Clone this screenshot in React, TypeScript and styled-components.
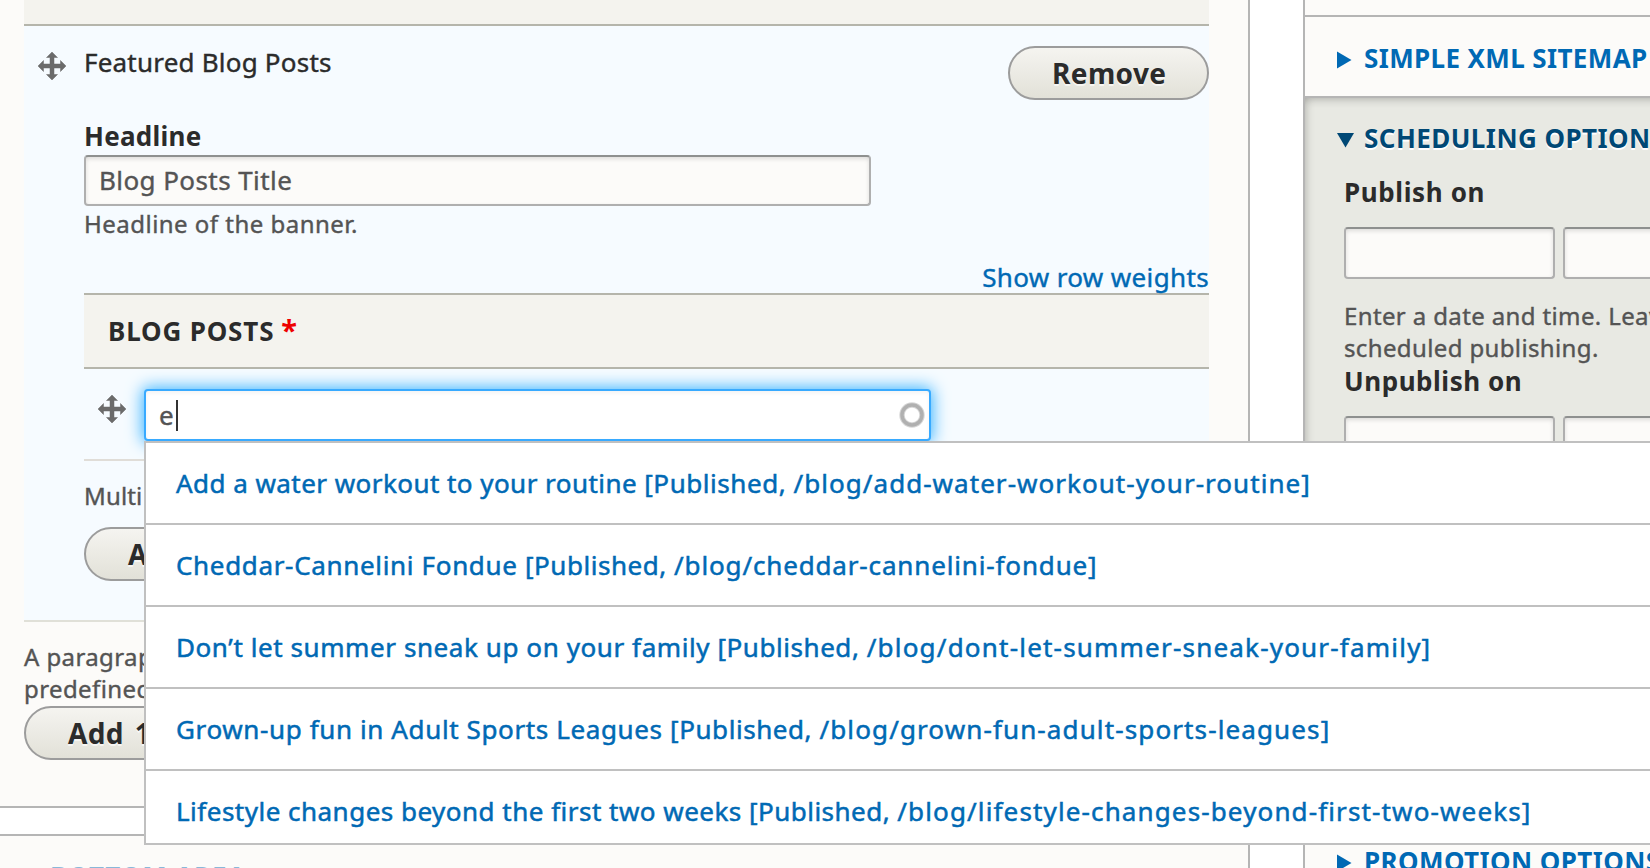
import React from "react";
import styled, { createGlobalStyle, css } from "styled-components";

const GlobalStyle = createGlobalStyle`
  html, body { margin: 0; background: #fff; }
  * { box-sizing: border-box; }
`;

const Page = styled.div`
  position: relative;
  display: flex;
  width: 1650px;
  height: 868px;
  overflow: hidden;
  color: #2b2b2b;
  font-family: "Noto Sans", "Open Sans", sans-serif;
  font-size: 26px;
  line-height: 36px;
  white-space: nowrap;
  -webkit-text-stroke: 0.4px currentColor;
`;

const MainColumn = styled.main`
  position: relative;
  z-index: 2;
  display: flex;
  flex-direction: column;
  gap: 26px;
  width: 1250px;
  flex: none;
`;

const MainPanel = styled.section`
  flex: none;
  height: 808px;
  padding: 0 39px 0 24px;
  background: #fcfbf9;
  border-right: 2px solid #b5b5b5;
  border-bottom: 2px solid #b5b5b5;
`;

const BottomPanel = styled.section`
  flex: none;
  height: 100px;
  padding: 22px 0 0 50px;
  background: #fcfbf9;
  border-top: 2px solid #b5b5b5;
  border-right: 2px solid #b5b5b5;
`;

const BottomTitle = styled.h3`
  margin: 0;
  color: #0069b4;
  font-size: 26px;
  font-weight: 700;
  line-height: 36px;
  letter-spacing: 0.9px;
  opacity: 0.45;
  -webkit-text-stroke: 0;
`;

const TableTop = styled.div`
  height: 26px;
  background: #f4f3ee;
  border-bottom: 2px solid #b5b5ab;
`;

const ParagraphRow = styled.div`
  display: grid;
  grid-template-columns: 60px 1fr;
  height: 596px;
  background: #f6fbff;
  border-bottom: 2px solid #e0e0d8;
`;

const Handle = styled.svg`
  display: block;
  flex: none;
  width: 28px;
  height: 28px;
  margin: 26px 18px 0 14px;
  fill: #6b6b6b;
`;

const RowHeader = styled.div`
  display: flex;
  justify-content: space-between;
  align-items: flex-start;
  height: 92px;
`;

const RowTitle = styled.div`
  padding-top: 18px;
  letter-spacing: 0.21px;
`;

const Button = styled.button<{ $top: number; $width: number }>`
  display: block;
  width: ${(p) => p.$width}px;
  height: 54px;
  margin: ${(p) => p.$top}px 0 0;
  padding: 0 0 0 42px;
  overflow: hidden;
  border: 2px solid #9c9c9c;
  border-radius: 27px;
  background: linear-gradient(#f5f4f0, #e2e1d8);
  color: #2b2b2b;
  font: 700 28px/50px "Noto Sans", "Open Sans", sans-serif;
  letter-spacing: 0.4px;
  word-spacing: 3px;
  text-align: left;
  text-shadow: 0 2px 0 rgba(255, 255, 255, 0.65);
  white-space: nowrap;
  -webkit-text-stroke: 0;
`;

const Label = styled.label<{ $spacing: number }>`
  display: block;
  font-weight: 700;
  letter-spacing: ${(p) => p.$spacing}px;
  -webkit-text-stroke: 0;
`;

const focused = css`
  background: #fff;
  border-color: #38aaff;
  box-shadow: inset 0 2px 4px rgba(0, 0, 0, 0.05), 0 0 16px 2px #40b6ff;
`;

const Field = styled.div<{ $width: number; $height?: number; $focused?: boolean }>`
  display: flex;
  align-items: center;
  flex: none;
  width: ${(p) => p.$width}px;
  height: ${(p) => p.$height ?? 52}px;
  padding: 0 4px 0 13px;
  border: 2px solid #afafaf;
  border-top-color: #8e908f;
  border-radius: 4px;
  background: #fcfbf9;
  box-shadow: inset 0 2px 4px rgba(0, 0, 0, 0.125);
  color: #545454;
  letter-spacing: 0.42px;
  ${(p) => p.$focused && focused}
`;

const FieldText = styled.span`
  margin-bottom: 2px;
`;

const Caret = styled.span`
  width: 2px;
  height: 31px;
  margin-left: 2px;
  background: #333;
`;

const Spinner = styled.svg`
  width: 26px;
  height: 26px;
  margin-left: auto;
`;

const Help = styled.div<{ $spacing: number }>`
  color: #545454;
  font-size: 24px;
  line-height: 32px;
  letter-spacing: ${(p) => p.$spacing}px;
`;

const WeightsLink = styled.a`
  display: block;
  margin-top: 20px;
  color: #0069b4;
  line-height: 34px;
  height: 33px;
  text-align: right;
  letter-spacing: 0.36px;
`;

const TableHead = styled.div`
  height: 76px;
  padding: 18px 24px;
  border-top: 2px solid #b5b5ab;
  border-bottom: 2px solid #b5b5ab;
  background: #f4f3ee;
  font-weight: 700;
  letter-spacing: 0.85px;
  -webkit-text-stroke: 0;
`;

const Required = styled.span`
  margin-left: 7px;
  color: #ee0000;
  font-size: 29px;
  line-height: 1;
`;

const TableRow = styled.div`
  display: flex;
  height: 92px;
  border-bottom: 2px solid #e0ddd8;
`;

const Autocomplete = styled.div`
  position: relative;
  flex: none;
  margin-top: 20px;
`;

const Menu = styled.ul`
  position: absolute;
  top: 52px;
  left: 0;
  width: 1600px;
  height: 404px;
  margin: 0;
  padding: 0;
  overflow: hidden;
  list-style: none;
  border: 2px solid #c0c0c0;
  background: #fff;
`;

const MenuItem = styled.li`
  height: 82px;
  padding: 22px 30px;
  border-bottom: 2px solid #c0c0c0;
  color: #0069b4;
  -webkit-text-stroke: 0.5px currentColor;
`;

const Spaced = styled.span<{ $spacing: number }>`
  letter-spacing: ${(p) => p.$spacing}px;
`;

const Sidebar = styled.aside`
  flex: none;
  width: 400px;
  margin-left: 53px;
  border-left: 2px solid #b5b5b5;
  background: #fcfbf9;
`;

const SideTop = styled.div`
  height: 17px;
  border-bottom: 2px solid #b5b5b5;
`;

const SidePanel = styled.section<{ $height: number; $open?: boolean }>`
  height: ${(p) => p.$height}px;
  padding: ${(p) => (p.$open ? 22 : 23)}px 0 0 39px;
  border-bottom: 2px solid #b5b5b5;
  ${(p) =>
    p.$open &&
    css`
      background: #e8e9e3;
      box-shadow: inset 0 5px 9px -3px rgba(0, 0, 0, 0.2), inset 6px 0 9px -4px rgba(0, 0, 0, 0.14);
    `}
`;

const Summary = styled.div<{ $open?: boolean; $spacing: number }>`
  display: flex;
  margin-left: -7px;
  color: ${(p) => (p.$open ? "#004875" : "#0069b4")};
  font-weight: 700;
  letter-spacing: ${(p) => p.$spacing}px;
  text-shadow: 0 2px 0 #fff;
  -webkit-text-stroke: 0;
`;

const Triangle = styled.svg`
  flex: none;
  width: 17px;
  height: 18px;
  margin: 11px 10px 0 0;
  fill: currentColor;
`;

const Fields = styled.div<{ $top: number }>`
  display: flex;
  gap: 8px;
  margin: ${(p) => p.$top}px 0 18px;
`;

const DragHandle = () => (
  <Handle viewBox="0 0 28 28">
    <path d="M14 0L19.5 5.5H16V12H22.5V8.5L28 14L22.5 19.5V16H16V22.5H19.5L14 28L8.5 22.5H12V16H5.5V19.5L0 14L5.5 8.5V12H12V5.5H8.5Z" stroke="#6b6b6b" strokeWidth="0.5" />
  </Handle>
);

const posts = [
  { title: "Add a water workout to your routine ", path: "/blog/add-water-workout-your-routine]", spacing: [0.45, 0.55, 1.04] },
  { title: "Cheddar-Cannelini Fondue ", path: "/blog/cheddar-cannelini-fondue]", spacing: [0.665, 0.53, 0.85] },
  { title: "Don’t let summer sneak up on your family ", path: "/blog/dont-let-summer-sneak-your-family]", spacing: [0.58, 0.55, 1.2] },
  { title: "Grown-up fun in Adult Sports Leagues ", path: "/blog/grown-fun-adult-sports-leagues]", spacing: [0.62, 0.56, 1.12] },
  { title: "Lifestyle changes beyond the first two weeks ", path: "/blog/lifestyle-changes-beyond-first-two-weeks]", spacing: [0.485, 0.465, 1.13] },
];

export default function App() {
  return (
    <>
      <GlobalStyle />
      <Page>
        <MainColumn>
          <MainPanel>
            <TableTop />
            <ParagraphRow>
              <DragHandle />
              <div>
                <RowHeader>
                  <RowTitle>Featured Blog Posts</RowTitle>
                  <Button $top={20} $width={201}>Remove</Button>
                </RowHeader>
                <Label $spacing={0.28}>Headline</Label>
                <Field $width={787} $height={51} style={{ marginTop: 1 }}>
                  <FieldText>Blog Posts Title</FieldText>
                </Field>
                <Help $spacing={0.48} style={{ marginTop: 2 }}>Headline of the banner.</Help>
                <WeightsLink>Show row weights</WeightsLink>
                <TableHead>
                  BLOG POSTS<Required>*</Required>
                </TableHead>
                <TableRow>
                  <DragHandle />
                  <Autocomplete>
                    <Field $width={787} $focused>
                      e<Caret />
                      <Spinner viewBox="0 0 26 26">
                        <circle cx="13" cy="13" r="10" fill="none" stroke="#d6d6d6" strokeWidth="5.4" />
                        <circle cx="13" cy="13" r="10" fill="none" stroke="#b0b0b0" strokeWidth="3.4" />
                      </Spinner>
                    </Field>
                    <Menu>
                      {posts.map((p) => (
                        <MenuItem key={p.path}>
                          <Spaced $spacing={p.spacing[0]}>{p.title}</Spaced>
                          <Spaced $spacing={p.spacing[1]}>{"[Published, "}</Spaced>
                          <Spaced $spacing={p.spacing[2]}>{p.path}</Spaced>
                        </MenuItem>
                      ))}
                    </Menu>
                  </Autocomplete>
                </TableRow>
                <Help $spacing={0.14} style={{ marginTop: 19 }}>Multi</Help>
                <Button $top={15} $width={250}>Add</Button>
              </div>
            </ParagraphRow>
            <Help $spacing={0.4} style={{ marginTop: 19 }}>
              A paragraph
              <br />
              predefined
            </Help>
            <Button $top={1} $width={250}>Add 1</Button>
          </MainPanel>
          <BottomPanel>
            <BottomTitle>BOTTOM AREA</BottomTitle>
          </BottomPanel>
        </MainColumn>
        <Sidebar>
          <SideTop />
          <SidePanel $height={81}>
            <Summary $spacing={0.37}>
              <Triangle viewBox="0 0 17 18"><path d="M0 0.5L14.5 9L0 17.5Z" /></Triangle>
              SIMPLE XML SITEMAP
            </Summary>
          </SidePanel>
          <SidePanel $height={722} $open>
            <Summary $spacing={0.45} $open>
              <Triangle viewBox="0 0 17 18"><path d="M0 2H17L8.5 16.5Z" /></Triangle>
              SCHEDULING OPTIONS
            </Summary>
            <Label $spacing={0.62} style={{ marginTop: 18 }}>Publish on</Label>
            <Fields $top={17}>
              <Field $width={211} />
              <Field $width={211} />
            </Fields>
            <Help $spacing={0.37} style={{ paddingTop: 3 }}>
              Enter a date and time. Leave
              <br />
              scheduled publishing.
            </Help>
            <Label $spacing={0.55} style={{ marginTop: -1 }}>Unpublish on</Label>
            <Fields $top={17}>
              <Field $width={211} />
              <Field $width={211} />
            </Fields>
          </SidePanel>
          <SidePanel $height={81}>
            <Summary $spacing={0.41}>
              <Triangle viewBox="0 0 17 18"><path d="M0 0.5L14.5 9L0 17.5Z" /></Triangle>
              PROMOTION OPTIONS
            </Summary>
          </SidePanel>
        </Sidebar>
      </Page>
    </>
  );
}
